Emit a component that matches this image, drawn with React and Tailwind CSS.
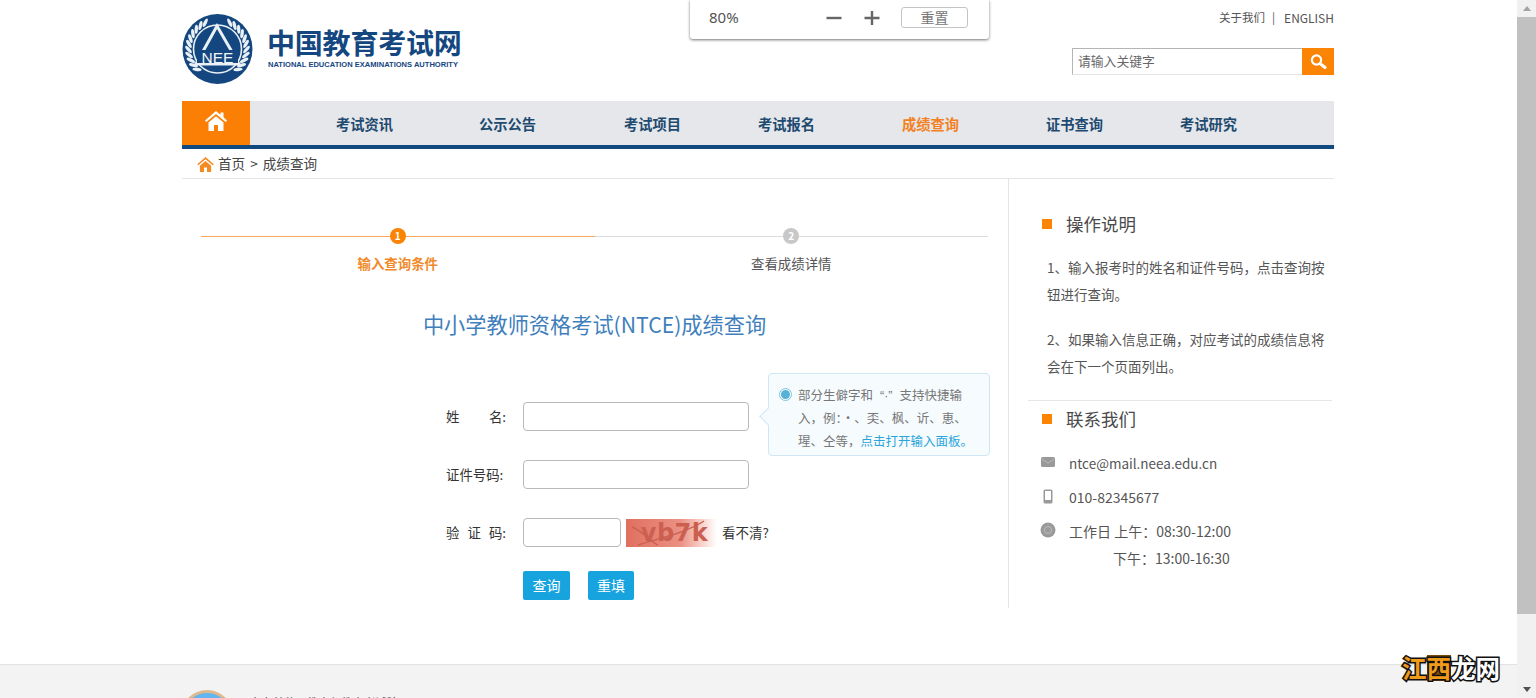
import React from "react";

const navItems = [
  ["考试资讯", "ml-[86px]", false],
  ["公示公告", "ml-[86px]", false],
  ["考试项目", "ml-[88px]", false],
  ["考试报名", "ml-[77px]", false],
  ["成绩查询", "ml-[87px]", true],
  ["证书查询", "ml-[87px]", false],
  ["考试研究", "ml-[77px]", false],
];

function Logo() {
  const leaves = [];
  for (let i = 0; i < 11; i++) leaves.push(135 + i * 11);
  return (
    <svg width="71" height="70" viewBox="0 0 71 70" className="shrink-0">
      <circle cx="35.5" cy="35" r="35" fill="#14477f" />
      {leaves.map((a, i) => {
        const r = (a * Math.PI) / 180;
        const x = 35.5 + 29 * Math.cos(r);
        const y = 35 + 29 * Math.sin(r);
        const x2 = 35.5 - 29 * Math.cos(r);
        return (
          <g key={i} fill="#e9f0f6">
            <ellipse cx={x} cy={y} rx="4.6" ry="1.7" transform={`rotate(${a + 50} ${x} ${y})`} />
            <ellipse cx={x2} cy={y} rx="4.6" ry="1.7" transform={`rotate(${-(a + 50)} ${x2} ${y})`} />
          </g>
        );
      })}
      <circle cx="35.5" cy="35" r="24" fill="#14477f" stroke="#e9f0f6" strokeWidth="1.6" />
      <path d="M35 12 L14 50 H57 Z" fill="none" stroke="#e9f0f6" strokeWidth="3" />
      <rect x="15" y="36" width="41" height="13" fill="#14477f" />
      <text x="35.5" y="49" textAnchor="middle" fontSize="15.5" fill="#f2f6fa" fontFamily="Liberation Sans, sans-serif">NEE</text>
    </svg>
  );
}

function Heading({ children }) {
  return (
    <div className="flex items-center gap-[14px] pl-[14px]">
      <span className="w-[10px] h-[10px] bg-[#fb8405]" />
      <span className="text-[17.5px] leading-[26px] text-[#4a4a4a]">{children}</span>
    </div>
  );
}

function Step({ n, label, active }) {
  return (
    <div className="w-[393.5px] flex flex-col items-center relative">
      <div className={`h-px w-full mt-[8px] ${active ? "bg-[#f7a85c]" : "bg-[#dcdcdc]"}`} />
      <div className={`absolute top-0 w-[16px] h-[16px] rounded-full text-white text-[10px] font-bold leading-[16px] text-center ${active ? "bg-[#fb8405]" : "bg-[#c8c8c8]"}`}>{n}</div>
      <div className={`mt-[16px] text-[13.4px] leading-[20px] ${active ? "text-[#f08b2c] font-bold" : "text-[#555555]"}`}>{label}</div>
    </div>
  );
}

function Field({ label, children, className }) {
  return (
    <div className={`flex items-center ${className}`}>
      <div className="w-[60px] ml-[264px] mr-[17px] text-[13.4px] text-[#333333] flex justify-between whitespace-nowrap">
        {label.map((t) => (
          <span key={t}>{t}</span>
        ))}
      </div>
      {children}
    </div>
  );
}

const inputCls = "h-[29px] rounded-[4px] border border-[#b9b9b9] bg-white";

export default function App() {
  return (
    <div className="h-[698px] w-[1536px] overflow-hidden flex bg-white relative font-['Noto_Sans_CJK_SC','Noto_Sans',sans-serif]">
      <div className="w-[1517px] shrink-0 flex flex-col">
        <div className="w-[1152px] ml-[182px]">
          {/* header */}
          <header className="h-[101px] flex justify-between">
            <div className="flex pt-[14px]">
              <Logo />
              <div className="ml-[15px] pt-[9px]">
                <div className="text-[28px] leading-[38px] font-bold text-[#14477f] tracking-[-0.2px] whitespace-nowrap ml-[-1px]">中国教育考试网</div>
                <div className="text-[7.55px] leading-[9px] mt-[-1px] font-bold text-[#14477f] whitespace-nowrap font-['Liberation_Sans',sans-serif]">NATIONAL EDUCATION EXAMINATIONS AUTHORITY</div>
              </div>
            </div>
            <div className="flex flex-col items-end pt-[10px]">
              <div className="h-[16px] flex items-center whitespace-nowrap text-[#555555]">
                <span className="text-[11.5px]">关于我们</span>
                <span className="text-[11.5px] ml-[7px] mr-[6px]">|</span>
                <span className="text-[12px] ml-[3px]">ENGLISH</span>
              </div>
              <div className="flex mt-[22px] w-[262px] h-[27px]">
                <div className="flex-1 border border-[#b5b5b5] border-r-0 border-b-[#e4e4e4] pl-[5px] text-[12.8px] leading-[24px] text-[#666666]">请输入关键字</div>
                <div className="w-[32px] bg-[#fb8405] flex items-center justify-center">
                  <svg width="18" height="18" viewBox="0 0 18 18" fill="none">
                    <circle cx="7.5" cy="7" r="4.6" stroke="#fff" strokeWidth="2.2" />
                    <path d="M11 10.5 L16 14.5" stroke="#fff" strokeWidth="3" strokeLinecap="round" />
                  </svg>
                </div>
              </div>
            </div>
          </header>

          {/* nav */}
          <nav className="h-[48px] bg-[#e5e7eb] border-b-[4px] border-[#114a80] flex items-center">
            <div className="w-[68px] self-stretch bg-[#fb7f05] flex items-center justify-center pb-[4px]">
              <svg width="22" height="20" viewBox="0 0 22 20" fill="#fff">
                <path d="M11 0 L15.5 3.8 V1.5 H18.5 V6.3 L22 9.5 L20.6 11 L11 2.9 L1.4 11 L0 9.5 Z" />
                <path d="M3.5 11.5 L11 5.2 L18.5 11.5 V20 H13 V14 H9 V20 H3.5 Z" />
              </svg>
            </div>
            {navItems.map(([t, ml, on]) => (
              <div key={t} className={`${ml} w-[57px] text-[14.25px] leading-[20px] mt-[1px] font-bold whitespace-nowrap ${on ? "text-[#f4811f]" : "text-[#1e4a70]"}`}>{t}</div>
            ))}
          </nav>

          {/* breadcrumb */}
          <div className="h-[30px] border-b border-[#e6e6e6] flex items-center pl-[15px]">
            <svg width="17" height="15" viewBox="0 0 22 20" fill="#f58a23" className="mt-[2px]">
              <path d="M11 0 L22 9.5 L20.6 11 L11 2.9 L1.4 11 L0 9.5 Z" />
              <path d="M3.5 11.5 L11 5.2 L18.5 11.5 V20 H13 V14 H9 V20 H3.5 Z" />
            </svg>
            <span className="ml-[4px] text-[13.6px] text-[#444444] whitespace-nowrap">首页<span className="mx-[5px]">&gt;</span>成绩查询</span>
          </div>

          {/* body */}
          <div className="flex h-[429px]">
            <main className="w-[827px] border-r border-[#e4e4e4]">
              <div className="flex ml-[19px] pt-[49px]">
                <Step n="1" label="输入查询条件" active />
                <Step n="2" label="查看成绩详情" />
              </div>
              <h1 className="ml-[19px] w-[787px] text-center text-[21.2px] leading-[30px] mt-[36px] text-[#3f7fbc]">中小学教师资格考试(NTCE)成绩查询</h1>

              <div className="relative">
                <Field label={["姓", "名:"]} className="mt-[63px]">
                  <div className={`${inputCls} w-[226px]`} />
                </Field>
                <Field label={["证件号码:"]} className="mt-[29px]">
                  <div className={`${inputCls} w-[226px]`} />
                </Field>
                <Field label={["验", "证", "码:"]} className="mt-[29px]">
                  <div className={`${inputCls} w-[98px]`} />
                  <div className="ml-[5px] w-[91px] h-[28px] bg-gradient-to-r from-[#e06f5f] via-[#ea9184] via-60% to-white relative overflow-hidden flex items-center justify-center">
                    <span className="ml-[6px] text-[24px] leading-[28px] font-bold text-[#cb5f50] tracking-[0.5px] font-['DejaVu_Sans',sans-serif]">vb7k</span>
                    <svg width="91" height="28" viewBox="0 0 91 28" className="absolute left-0 top-0">
                      <path d="M6 8 C20 14 26 24 32 26 M12 26 C30 20 60 14 78 2" stroke="#cb5f50" strokeWidth="1.4" fill="none" />
                    </svg>
                  </div>
                  <span className="ml-[5px] text-[13.5px] text-[#333333]">看不清?</span>
                </Field>
                <div className="flex ml-[341px] mt-[24px] gap-[18px]">
                  <div className="w-[47px] h-[29px] rounded-[2px] bg-[#17a3de] text-white text-[14px] leading-[29px] text-center">查询</div>
                  <div className="w-[46px] h-[29px] rounded-[2px] bg-[#17a3de] text-white text-[14px] leading-[29px] text-center">重填</div>
                </div>

                {/* tooltip */}
                <div className="absolute left-[586px] top-[-29px] w-[222px] h-[83px] rounded-[4px] border border-[#cfe7f5] bg-[#f6fbfe] pl-[29px] pt-[9px] text-[12.5px] leading-[23px] text-[#777777] whitespace-nowrap">
                  <span className="absolute left-[10px] top-[14px] w-[13px] h-[13px] rounded-full border border-[#7cc4e2] bg-white flex items-center justify-center">
                    <span className="w-[9px] h-[9px] rounded-full bg-[#55b1d6]" />
                  </span>
                  <span className="absolute left-[-7px] top-[36px] w-[13px] h-[13px] rotate-45 bg-[#f6fbfe] border-l border-b border-[#cfe7f5]" />
                  <div className="h-[23px]">部分生僻字和<span className="mx-[7px] leading-[0] font-['Liberation_Sans',sans-serif]">“·”</span>支持快捷输</div>
                  <div className="h-[23px]">入，例：·、奀、枫、䜣、恵、</div>
                  <div className="h-[23px]">瑆、仝等，<span className="text-[#2aa5dc]">点击打开输入面板。</span></div>
                </div>
              </div>
            </main>

            <aside className="flex-1">
              <div className="pt-[32px] pl-[19px] pr-[2px]">
                <Heading>操作说明</Heading>
                <div className="mt-[17px] pl-[19px] text-[13.5px] leading-[27px] text-[#555555]">
                  <p>1、输入报考时的姓名和证件号码，点击查询按钮进行查询。</p>
                  <p className="mt-[18px]">2、如果输入信息正确，对应考试的成绩信息将会在下一个页面列出。</p>
                </div>
                <div className="mt-[20px] border-t border-[#e6e6e6] pt-[5px]">
                  <Heading>联系我们</Heading>
                </div>
                <div className="mt-[14px] pl-[13px] text-[14px] text-[#555555]">
                  <div className="flex items-center h-[34px]">
                    <svg width="14" height="10" viewBox="0 0 14 10" className="mr-[14px] mb-[2px]"><rect width="14" height="10" rx="1.5" fill="#999" /><path d="M1 2 L7 6 L13 2" stroke="#bbb" fill="none" /></svg>
                    <span className="text-[13.5px]">ntce@mail.neea.edu.cn</span>
                  </div>
                  <div className="flex items-center h-[34px] mb-[4px]">
                    <svg width="14" height="15" viewBox="0 0 14 15" className="mr-[14px] mb-[2px]"><rect x="2.5" y="0.5" width="9" height="14" rx="1.5" fill="#999" /><rect x="4" y="2" width="6" height="9" fill="#fff" /></svg>
                    <span>010-82345677</span>
                  </div>
                  <div className="flex h-[27px] items-center">
                    <svg width="16" height="16" viewBox="0 0 16 16" className="ml-[-1px] mr-[13px] mb-[3px]"><circle cx="8" cy="8" r="7.5" fill="#9a9a9a" /><circle cx="8" cy="8" r="3.5" fill="none" stroke="#bdbdbd" /></svg>
                    <span className="whitespace-pre">工作日 上午：08:30-12:00</span>
                  </div>
                  <div className="h-[27px] leading-[27px] pl-[72px] whitespace-pre">下午：13:00-16:30</div>
                </div>
              </div>
            </aside>
          </div>
        </div>

        {/* footer */}
        <footer className="mt-[56px] flex-1 border-t border-[#e2e2e2] bg-[#f3f3f3] overflow-hidden">
          <div className="ml-[181px] pt-[25px] flex">
            <div className="w-[52px] h-[52px] rounded-full bg-[#62b5ee] border-[3px] border-[#dcb98e] shrink-0" />
            <div className="ml-[17px] pt-[3px] text-[11.4px] leading-[18px] text-[#444444] whitespace-nowrap">主办单位：教育部教育考试院</div>
          </div>
        </footer>
      </div>

      {/* page scrollbar */}
      <div className="w-[19px] shrink-0 bg-[#f1f1f1] flex flex-col items-center">
        <div className="h-[17px] flex items-center justify-center shrink-0">
          <span className="w-0 h-0 border-x-[4px] border-x-transparent border-b-[5px] border-b-[#a3a3a3]" />
        </div>
        <div className="w-full h-[597px] bg-[#c1c1c1] shrink-0" />
        <div className="mt-auto h-[17px] flex items-center justify-center shrink-0">
          <span className="w-0 h-0 border-x-[4px] border-x-transparent border-t-[5px] border-t-[#505050]" />
        </div>
      </div>

      {/* zoom popup */}
      <div className="absolute left-[690px] top-0 w-[299px] h-[39px] bg-white rounded-b-[3px] shadow-[0_1px_3px_rgba(0,0,0,0.55)] flex items-center pl-[19px] pb-[4px] font-['Noto_Sans',sans-serif]">
        <span className="text-[15px] text-[#555555] w-[117px]">80%</span>
        <svg width="16" height="16" viewBox="0 0 16 16" stroke="#666" strokeWidth="2.4"><path d="M0.5 8 H15.5" /></svg>
        <svg width="16" height="16" viewBox="0 0 16 16" stroke="#666" strokeWidth="2.4" className="ml-[22px]"><path d="M0.5 8 H15.5 M8 1 V15" /></svg>
        <div className="ml-[21px] w-[67px] h-[21px] border border-[#c4c4c4] rounded-[3px] text-[14px] leading-[19px] text-center text-[#777777] font-['Noto_Sans_CJK_SC',sans-serif]">重置</div>
      </div>

      {/* watermark */}
      <div className="absolute left-[1402px] top-[655px] flex text-[24.5px] leading-[26px] font-bold font-['Noto_Sans_CJK_SC',sans-serif] [-webkit-text-stroke:3px_#111111] [paint-order:stroke_fill]">
        <span className="text-[#f09a1a]">江</span>
        <span className="text-[#f09a1a] bg-[#7a4a08]">西</span>
        <span className="text-white">龙网</span>
      </div>
    </div>
  );
}
